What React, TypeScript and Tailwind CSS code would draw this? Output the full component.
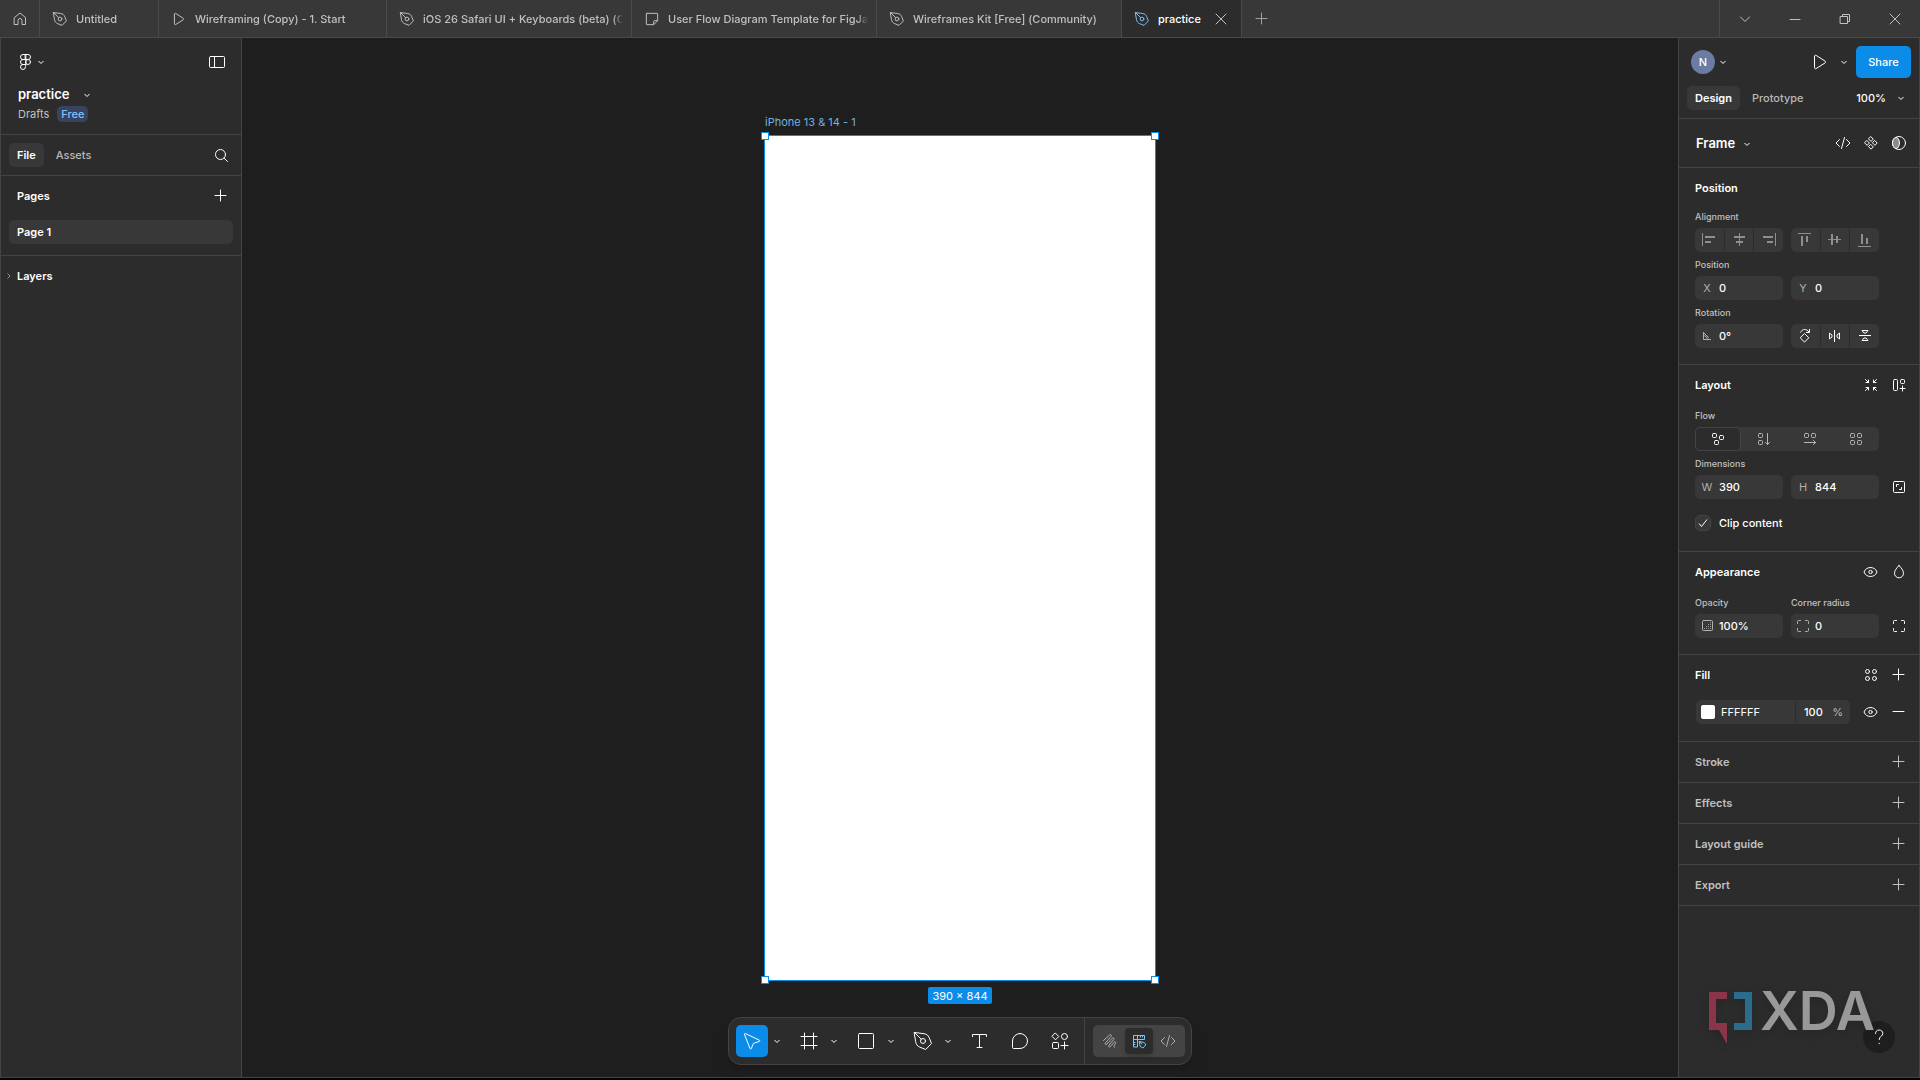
import type { ReactNode } from "react";

type IconProps = { children: ReactNode; className?: string; weight?: number };

function Icon({ children, className = "size-6", weight = 1 }: IconProps) {
  return (
    <svg
      viewBox="0 0 24 24"
      fill="none"
      stroke="currentColor"
      strokeWidth={weight}
      strokeLinecap="round"
      strokeLinejoin="round"
      aria-hidden="true"
      className={`shrink-0 ${className}`}
    >
      {children}
    </svg>
  );
}

// 28x24 artwork that fills one cell of a three button strip
function StripIcon({ children }: { children: ReactNode }) {
  return (
    <svg viewBox="0 0 28 24" fill="none" stroke="currentColor" aria-hidden="true" className="h-6 w-7">
      {children}
    </svg>
  );
}

const Chevron = ({ className = "size-4" }: { className?: string }) => (
  <svg viewBox="0 0 16 16" fill="none" stroke="currentColor" aria-hidden="true" className={`shrink-0 ${className}`}>
    <path d="M5.5 7 8 9.5 10.5 7" />
  </svg>
);

const Pen = ({ className, weight }: { className?: string; weight?: number }) => (
  <Icon className={className} weight={weight}>
    <path d="M3.5 3.5 13 4.7c2.500.4 4.200 1.500 5.200 4l2.300 5.800-5.800 6-5.800-2.300c-2.500-1-3.800-2.700-4.200-5.200z" />
    <path d="m3.500 3.500 6.700 6.700" />
    <circle cx="12" cy="12" r="2.500" />
  </Icon>
);

const Plus = () => (
  <Icon>
    <path d="M6 11.500h11M11.500 6v11" />
  </Icon>
);

const Play = ({ className, weight }: { className?: string; weight?: number }) => (
  <Icon className={className} weight={weight}>
    <path d="M6.500 6.300v11.400c0 1 .8 1.300 1.600.9l9-5.700c.7-.5.7-1.300 0-1.800l-9-5.700c-.8-.4-1.600 0-1.600.9z" />
  </Icon>
);

const Code = ({ className }: { className?: string }) => (
  <Icon className={className}>
    <path d="m8.500 8.500-3.500 3.500 3.500 3.500M15.500 8.500l3.500 3.500-3.500 3.500M13.500 6.500l-3 11" />
  </Icon>
);

const Eye = () => (
  <Icon>
    <path d="M11.500 7.500c3 0 5.300 1.500 6.500 4.500-1.200 3-3.500 4.500-6.500 4.500S6.200 15 5 12c1.200-3 3.500-4.500 6.500-4.500z" />
    <circle cx="11.500" cy="12" r="1.700" />
  </Icon>
);

const FigJam = () => (
  <Icon className="size-4" weight={1.500}>
    <path d="M4.500 3.500h15a1 1 0 0 1 1 1v10l-6 6h-10a1 1 0 0 1-1-1v-15a1 1 0 0 1 1-1zM20 14.500h-4a1.500 1.500 0 0 0-1.500 1.500v4" />
  </Icon>
);

const Corners = () => (
  <Icon>
    <path d="M6.500 9.500v-2a1 1 0 0 1 1-1h2M14.500 6.500h2a1 1 0 0 1 1 1v2M17.500 14.500v2a1 1 0 0 1-1 1h-2M9.500 17.500h-2a1 1 0 0 1-1-1v-2" />
  </Icon>
);

const fileTabs = [
  { title: "Untitled", width: "w-[119px]", icon: <Pen className="size-[18px]" weight={1.300} /> },
  { title: "Wireframing (Copy) - 1. Start", width: "w-[228px]", icon: <Play className="size-5" weight={1.200} /> },
  { title: "iOS 26 Safari UI + Keyboards (beta) (C", width: "w-[245px]", icon: <Pen className="size-[18px]" weight={1.300} /> },
  { title: "User Flow Diagram Template for FigJa", width: "w-[245px]", icon: <FigJam /> },
  { title: "Wireframes Kit [Free] (Community)", width: "w-[245px]", icon: <Pen className="size-[18px]" weight={1.300} /> },
];

function TitleBar() {
  return (
    <header className="flex h-[38px] shrink-0 border-b border-[#4a4a4a] bg-[#383838] font-medium text-[#c0c0c0]">
      <button aria-label="Home" className="flex w-10 items-center justify-center border-r border-[#4a4a4a]">
        <Icon>
          <path d="M6.500 10.500 12 6l5.500 4.500v7h-3.500v-4a2 2 0 0 0-4 0v4H6.500z" />
        </Icon>
      </button>
      {fileTabs.map((tab) => (
        <button key={tab.title} className={`flex items-center gap-2 border-r border-[#4a4a4a] pt-px pl-3 ${tab.width}`}>
          <span className="flex w-4 shrink-0 items-center justify-center">{tab.icon}</span>
          <span className="min-w-0 flex-1 mask-r-from-[190px] mask-r-to-[200px] text-left whitespace-nowrap">{tab.title}</span>
        </button>
      ))}
      <div className="flex w-[120px] items-center border-r border-[#4a4a4a] bg-[#2c2c2c] px-3 pt-px">
        <button className="flex flex-1 items-center gap-2 text-white">
          <span className="flex w-4 shrink-0 items-center justify-center text-[#7cc4f8]">
            <Pen className="size-[18px]" weight={1.300} />
          </span>
          practice
        </button>
        <button aria-label="Close tab" className="flex w-4 justify-center">
          <Icon>
            <path d="m7 7 10 10M17 7 7 17" />
          </Icon>
        </button>
      </div>
      <button aria-label="New tab" className="flex w-[39px] items-center justify-center pt-px text-[#a0a0a0]">
        <Plus />
      </button>
      <div className="ml-auto flex border-l border-[#4a4a4a]">
        <button aria-label="Tab list" className="flex w-[50px] items-center justify-center">
          <Icon><path d="M7.500 10 12 14.500l4.500-4.500" /></Icon>
        </button>
        <button aria-label="Minimize" className="flex w-[50px] items-center justify-center">
          <Icon><path d="M7 12.500h10" /></Icon>
        </button>
        <button aria-label="Restore" className="flex w-[50px] items-center justify-center">
          <Icon><path d="M7.500 9.500h7v7h-7zM9.500 9.500v-2h7v7h-2" /></Icon>
        </button>
        <button aria-label="Close window" className="flex w-[50px] items-center justify-center">
          <Icon><path d="m7 7 10 10M17 7 7 17" /></Icon>
        </button>
      </div>
    </header>
  );
}

function LeftPanel() {
  return (
    <aside className="w-[242px] shrink-0 border-x border-[#444] bg-[#2c2c2c]">
      <div className="h-[97px] border-b border-[#444] pt-3">
        <div className="flex items-center justify-between px-3">
          <button aria-label="Main menu" className="flex items-center">
            <Icon>
              <path d="M12.500 4.500h-2.500a2.500 2.500 0 0 0 0 5h2.500zM12.500 4.500H15a2.500 2.500 0 0 1 0 5h-2.500zM12.500 9.500h-2.500a2.500 2.500 0 0 0 0 5h2.500zM12.500 14.500h-2.500a2.500 2.500 0 1 0 2.500 2.500z" />
              <circle cx="15" cy="12" r="2.500" />
            </Icon>
            <Chevron className="-ml-1 size-4" />
          </button>
          <button aria-label="Toggle sidebar">
            <Icon>
              <rect x="4.500" y="6.500" width="15" height="11" rx="1" />
              <path d="M9.500 6.500v11" />
            </Icon>
          </button>
        </div>
        <button className="mt-[11px] flex h-5 items-center gap-2.5 pl-[17px] text-[13px] font-semibold">
          practice
          <Chevron className="size-4" />
        </button>
        <div className="mt-px flex items-center gap-2 pl-[17px] text-[#c0c0c0]">
          <a href="#drafts">Drafts</a>
          <span className="rounded-[5px] bg-[#394360] px-1 leading-4 font-medium text-[#7cc4f8]">Free</span>
        </div>
      </div>
      <div className="flex h-[41px] items-center border-b border-[#444] px-2 font-medium">
        <button className="h-6 rounded-[5px] bg-[#383838] px-2 font-semibold">File</button>
        <button className="ml-1 h-6 px-2 text-[#b8b8b8]">Assets</button>
        <button aria-label="Search" className="ml-auto">
          <Icon>
            <circle cx="11.500" cy="11.500" r="5" />
            <path d="m15.200 15.200 3.300 3.300" />
          </Icon>
        </button>
      </div>
      <section className="h-20 border-b border-[#444] px-2">
        <div className="flex h-10 items-center justify-between pl-2">
          <h2 className="font-semibold">Pages</h2>
          <button aria-label="Add page"><Plus /></button>
        </div>
        <button className="mt-1 h-6 w-full rounded-[5px] bg-[#383838] px-2 text-left font-semibold">Page 1</button>
      </section>
      <button className="flex h-10 items-center font-semibold">
        <svg viewBox="0 0 16 24" fill="none" stroke="#8c8c8c" aria-hidden="true" className="h-6 w-4">
          <path d="m6.500 9.500 2.500 2.500-2.500 2.500" />
        </svg>
        Layers
      </button>
    </aside>
  );
}

function Toolbar() {
  return (
    <div className="absolute inset-x-0 bottom-3 mx-auto flex h-12 w-[464px] items-center rounded-[13px] border border-[#444] bg-[#2c2c2c] pl-[7px] shadow-lg">
      <div className="flex gap-2">
        <div className="flex items-center">
          <button aria-label="Move" className="flex size-8 items-center justify-center rounded-[5px] bg-[#0c8ce9]">
            <Icon><path d="M4.500 5.500 10 19.500c.3.800 1.100.8 1.400 0l1.700-4.400c.2-.5.500-.8 1-1l5.200-1.600c.8-.3.800-1 0-1.300L5.400 4.500c-.6-.2-1.100.3-.9 1z" /></Icon>
          </button>
          <button aria-label="Move tools" className="flex w-[17px] justify-end"><Chevron /></button>
        </div>
        <div className="flex items-center">
          <button aria-label="Frame" className="flex size-8 items-center justify-center">
            <Icon><path d="M7.500 4v16M16.500 4v16M4 7.500h16M4 16.500h16" /></Icon>
          </button>
          <button aria-label="Region tools" className="flex w-[17px] justify-end"><Chevron /></button>
        </div>
        <div className="flex items-center">
          <button aria-label="Rectangle" className="flex size-8 items-center justify-center">
            <Icon><rect x="4.500" y="4.500" width="15" height="15" rx="1" /></Icon>
          </button>
          <button aria-label="Shape tools" className="flex w-[17px] justify-end"><Chevron /></button>
        </div>
        <div className="flex items-center">
          <button aria-label="Pen" className="flex size-8 items-center justify-center"><Pen /></button>
          <button aria-label="Creation tools" className="flex w-[17px] justify-end"><Chevron /></button>
        </div>
        <button aria-label="Text" className="flex size-8 items-center justify-center">
          <Icon><path d="M4.500 7.500v-2h14v2M11.500 5.500v13M9 18.500h5" /></Icon>
        </button>
        <button aria-label="Comment" className="flex size-8 items-center justify-center">
          <Icon><path d="M12 4.500a7.500 7.500 0 0 1 0 15H5.500a1 1 0 0 1-1-1V12A7.500 7.500 0 0 1 12 4.500z" /></Icon>
        </button>
        <button aria-label="Actions" className="flex size-8 items-center justify-center">
          <Icon>
            <path d="m7.500 4.200 3.300 3.300-3.300 3.300-3.300-3.300zM16.500 13v7M13 16.500h7" />
            <circle cx="16.500" cy="7.500" r="3" />
            <rect x="4.500" y="13.500" width="6" height="6" rx="1" />
          </Icon>
        </button>
      </div>
      <div className="ml-2 h-full border-l border-[#444]" />
      <div className="ml-2 flex h-8 items-center rounded-[5px] bg-[#444] px-0.5 text-[#b0b0b0]">
        <button aria-label="Draw" className="flex w-[30px] justify-center">
          <Icon>
            <path d="M5.500 11.500 11.600 6c1.200-1 2.400.2 1.500 1.400l-5.600 6.400c-1 1.300.2 2.300 1.400 1.300l5.300-5.800c1.100-1.100 2.400 0 1.500 1.200l-4.700 5.700c-1 1.300.2 2.400 1.400 1.400l3.600-4.300c1-1.100 2.300-.1 1.500 1.100l-1.300 2.100c-.4.900-.2 1.600.6 2" />
          </Icon>
        </button>
        <button aria-label="Design" className="flex h-[26px] w-7 items-center justify-center rounded-[4px] bg-[#2c2c2c] text-[#7cc4f8] shadow-md">
          <Icon>
            <path d="M7 6.500h10.500v4h-7v7.500h-4V7a.5.5 0 0 1 .5-.500zM10.500 6.500v4h-4M13.500 6.500v1.500M15.500 6.500v1.500M6.500 13.500h1.500M6.500 15.500h1.500" />
            <path d="m12.500 12.500 4.800 1.100 1.500 2.400-2.900 3-2.400-1.400zM12.500 12.500l2.300 2.500" />
          </Icon>
        </button>
        <button aria-label="Dev Mode" className="flex w-[30px] justify-center"><Code /></button>
      </div>
    </div>
  );
}

function Canvas() {
  return (
    <main className="relative flex min-w-0 flex-1 flex-col items-center overflow-hidden bg-[#1e1e1e] pt-[76px]">
      <div className="w-[390px]">
        <p className="mb-1.5 leading-4 text-[#6fb2e3]">iPhone 13 &amp; 14 - 1</p>
        <div className="relative h-[844px] bg-white ring-1 ring-[#0c8ce9]">
          <i className="absolute -top-1 -left-1 size-2 border border-[#0c8ce9] bg-white" />
          <i className="absolute -top-1 -right-1 size-2 border border-[#0c8ce9] bg-white" />
          <i className="absolute -bottom-1 -left-1 size-2 border border-[#0c8ce9] bg-white" />
          <i className="absolute -right-1 -bottom-1 size-2 border border-[#0c8ce9] bg-white" />
        </div>
      </div>
      <span className="mt-[7px] rounded-[2px] bg-[#0c8ce9] px-1 pt-px leading-4">390 × 844</span>
      <Toolbar />
    </main>
  );
}

function Field({ label, value, children }: { label: string; value: string; children: ReactNode }) {
  return (
    <label className="flex h-6 items-center rounded-[5px] bg-[#383838] text-[#b0b0b0]">
      <span className="flex w-6 shrink-0 items-center justify-center">{children}</span>
      <input aria-label={label} defaultValue={value} className="w-full min-w-0 bg-transparent font-medium text-white outline-none" />
    </label>
  );
}

const Label = ({ children }: { children: ReactNode }) => (
  <p className="flex h-6 items-center pt-px text-[9px] font-medium text-[#c0c0c0]">{children}</p>
);

const strip = "grid w-[88px] grid-cols-[29px_28px_29px] gap-px overflow-hidden rounded-[5px]";
const cell = "h-6 bg-[#383838]";
const row = "grid grid-cols-[88px_88px_24px] items-center gap-x-2";

function PositionSection() {
  return (
    <section className="border-b border-[#444] pb-4 pl-4">
      <h2 className="flex h-9 items-center pt-1 font-semibold">Position</h2>
      <Label>Alignment</Label>
      <div className={`${row} text-[#8f8f8f]`}>
        <div className={strip}>
          <button aria-label="Align left" className={cell}>
            <StripIcon><path d="M7.500 5v13" /><path d="M10 9h10M10 14h6" strokeWidth="2" /></StripIcon>
          </button>
          <button aria-label="Align horizontal centers" className={cell}>
            <StripIcon><path d="M14.500 5v13" /><path d="M9 9h11M11 14h7" strokeWidth="2" /></StripIcon>
          </button>
          <button aria-label="Align right" className={cell}>
            <StripIcon><path d="M21.500 5v13" /><path d="M9 9h10M13 14h6" strokeWidth="2" /></StripIcon>
          </button>
        </div>
        <div className={strip}>
          <button aria-label="Align top" className={cell}>
            <StripIcon><path d="M7 5.500h13" /><path d="M11 8v10M16 8v6" strokeWidth="2" /></StripIcon>
          </button>
          <button aria-label="Align vertical centers" className={cell}>
            <StripIcon><path d="M7 11.500h13" /><path d="M11 6v11M16 8v7" strokeWidth="2" /></StripIcon>
          </button>
          <button aria-label="Align bottom" className={cell}>
            <StripIcon><path d="M8 18.500h13" /><path d="M12 6v10M17 10v6" strokeWidth="2" /></StripIcon>
          </button>
        </div>
      </div>
      <Label>Position</Label>
      <div className={row}>
        <Field label="X position" value="0">X</Field>
        <Field label="Y position" value="0">Y</Field>
      </div>
      <Label>Rotation</Label>
      <div className={row}>
        <Field label="Rotation" value="0°">
          <Icon><path d="M8.500 8.500v7h7M8.500 11.500a4 4 0 0 1 4 4M8.500 8.500l5 5" /></Icon>
        </Field>
        <div className={strip}>
          <button aria-label="Rotate 90 degrees" className={cell}>
            <StripIcon><path d="m13.500 9.500 4.300 4.300-4.300 4.300-4.300-4.300zM9.500 8.500c1-2 2.300-3 4-3 1.800 0 3 .8 4.500 2.500M18.500 5v3.500H15" /></StripIcon>
          </button>
          <button aria-label="Flip horizontal" className={cell}>
            <StripIcon><path d="M13.500 6v12M8.500 9v6l2.500-2v-2zM18.500 9v6l-2.500-2v-2z" /></StripIcon>
          </button>
          <button aria-label="Flip vertical" className={cell}>
            <StripIcon><path d="M9 11.500h12M12 6.500h6l-2 2.500h-2zM12 16.500h6l-2-2.500h-2z" /></StripIcon>
          </button>
        </div>
      </div>
    </section>
  );
}

function SectionHead({ title, children }: { title: string; children: ReactNode }) {
  return (
    <div className="flex h-10 items-center justify-between pr-2">
      <h2 className="font-semibold">{title}</h2>
      <div className="flex gap-1">{children}</div>
    </div>
  );
}

function LayoutSection() {
  return (
    <section className="border-b border-[#444] pb-4 pl-4">
      <SectionHead title="Layout">
        <button aria-label="Resize to fit">
          <Icon><path d="M6.500 6.500 9.500 9.500M9.500 7v2.500H7M17.500 6.500l-3 3M14.500 7v2.500H17M6.500 17.500l3-3M7 14.500h2.500V17M17.500 17.500l-3-3M17 14.500h-2.500V17" /></Icon>
        </button>
        <button aria-label="Use auto layout">
          <Icon><path d="M15.500 13v5M13 15.500h5" /><rect x="6.500" y="6.500" width="4" height="11" rx="1" /><rect x="13.500" y="6.500" width="4" height="4" rx="1" /></Icon>
        </button>
      </SectionHead>
      <div className="-mt-0.5">
        <Label>Flow</Label>
        <div className="grid w-[184px] grid-cols-4 rounded-[5px] bg-[#383838] text-[#b8b8b8]">
          <button aria-label="Free form" className="flex h-6 items-center justify-center rounded-[5px] border border-[#444] bg-[#2c2c2c] text-white">
            <Icon><rect x="6.500" y="6.500" width="4" height="4" rx="1" /><rect x="13.500" y="8.500" width="4" height="4" rx="1" /><rect x="8.500" y="13.500" width="4" height="4" rx="1" /></Icon>
          </button>
          <button aria-label="Vertical" className="flex h-6 items-center justify-center">
            <Icon><rect x="6.500" y="6.500" width="4" height="4" rx="1" /><rect x="6.500" y="13.500" width="4" height="4" rx="1" /><path d="M15.500 6.500v11M13.500 15.500l2 2 2-2" /></Icon>
          </button>
          <button aria-label="Horizontal" className="flex h-6 items-center justify-center">
            <Icon><rect x="6.500" y="6.500" width="4" height="4" rx="1" /><rect x="13.500" y="6.500" width="4" height="4" rx="1" /><path d="M6.500 15.500h11M15.500 13.500l2 2-2 2" /></Icon>
          </button>
          <button aria-label="Grid" className="flex h-6 items-center justify-center">
            <Icon><rect x="6.500" y="6.500" width="4" height="4" rx="1" /><rect x="13.500" y="6.500" width="4" height="4" rx="1" /><rect x="6.500" y="13.500" width="4" height="4" rx="1" /><rect x="13.500" y="13.500" width="4" height="4" rx="1" /></Icon>
          </button>
        </div>
      </div>
      <Label>Dimensions</Label>
      <div className={row}>
        <Field label="Width" value="390">W</Field>
        <Field label="Height" value="844">H</Field>
        <button aria-label="Lock aspect ratio">
          <Icon><rect x="6.500" y="6.500" width="11" height="11" rx="1" /><path d="M9.500 11.500v-2h2M12.500 14.500h2v-2" /></Icon>
        </button>
      </div>
      <div className="mt-4 mb-1 flex h-4 items-center gap-2">
        <span className="relative size-4">
          <input id="clip" type="checkbox" defaultChecked className="block size-4 appearance-none rounded-[5px] border border-[#444] bg-[#383838]" />
          <svg viewBox="0 0 16 16" fill="none" stroke="currentColor" aria-hidden="true" className="pointer-events-none absolute inset-0 size-4">
            <path d="m4 8.500 2.500 3L12 4.500" />
          </svg>
        </span>
        <label htmlFor="clip" className="font-medium">Clip content</label>
      </div>
    </section>
  );
}

function AppearanceSection() {
  return (
    <section className="border-b border-[#444] pb-4 pl-4">
      <SectionHead title="Appearance">
        <button aria-label="Toggle visibility"><Eye /></button>
        <button aria-label="Blend mode">
          <Icon><path d="M12 5.500c2.500 2.700 4.500 5 4.500 7.800a4.500 4.500 0 0 1-9 0c0-2.800 2-5.100 4.500-7.800z" /></Icon>
        </button>
      </SectionHead>
      <div className={`${row} -mt-0.5`}>
        <Label>Opacity</Label>
        <Label>Corner radius</Label>
      </div>
      <div className={row}>
        <Field label="Opacity" value="100%">
          <Icon>
            <rect x="7.500" y="6.500" width="10" height="10" rx="1" />
            <path d="M15.500 8.500v0M13.500 10.500v0M15.500 10.500v0M11.500 12.500v0M13.500 12.500v0M15.500 12.500v0M9.500 14.500v0M11.500 14.500v0M13.500 14.500v0M15.500 14.500v0" />
          </Icon>
        </Field>
        <Field label="Corner radius" value="0"><Corners /></Field>
        <button aria-label="Individual corners"><Corners /></button>
      </div>
    </section>
  );
}

function FillSection() {
  return (
    <section className="border-b border-[#444] pb-4 pl-4">
      <SectionHead title="Fill">
        <button aria-label="Styles">
          <Icon><circle cx="8.500" cy="8.500" r="2" /><circle cx="15.500" cy="8.500" r="2" /><circle cx="8.500" cy="15.500" r="2" /><circle cx="15.500" cy="15.500" r="2" /></Icon>
        </button>
        <button aria-label="Add fill"><Plus /></button>
      </SectionHead>
      <div className="mt-[5px] flex h-[25px] items-start justify-between pr-2 pl-px">
        <div className="flex gap-px">
          <div className="flex h-6 w-[99px] items-center gap-1.5 rounded-l-[5px] bg-[#383838] pl-[5px]">
            <button aria-label="Fill colour" className="size-3.5 shrink-0 rounded-[2px] bg-white" />
            <input aria-label="Hex" defaultValue="FFFFFF" className="w-full min-w-0 bg-transparent outline-none" />
          </div>
          <div className="flex h-6 w-[54px] items-center justify-between rounded-r-[5px] bg-[#383838] pr-[7px] pl-2">
            <input aria-label="Fill opacity" defaultValue="100" className="w-6 bg-transparent font-medium outline-none" />
            <span className="text-[#b8b8b8]">%</span>
          </div>
        </div>
        <div className="flex gap-1">
          <button aria-label="Hide fill"><Eye /></button>
          <button aria-label="Remove fill"><Icon><path d="M6 11.500h11" /></Icon></button>
        </div>
      </div>
    </section>
  );
}

function RightPanel() {
  return (
    <aside className="relative w-[242px] shrink-0 border-x border-[#444] bg-[#2c2c2c]">
      <div className="h-[81px] border-b border-[#444] pt-2">
        <div className="flex h-8 items-center pr-2 pl-3">
          <button aria-label="Account" className="flex items-center">
            <span className="flex size-6 items-center justify-center rounded-full bg-[#6b7ba3] font-medium">N</span>
            <Chevron />
          </button>
          <button aria-label="Present" className="ml-auto"><Play /></button>
          <button aria-label="Present options" className="mx-1"><Chevron /></button>
          <button className="h-8 w-[55px] rounded-[5px] bg-[#0c8ce9] font-medium">Share</button>
        </div>
        <div className="mt-2 flex h-6 items-center pr-2.5 pl-2 font-medium">
          <button className="h-6 rounded-[5px] bg-[#383838] px-2 font-semibold">Design</button>
          <button className="ml-1 h-6 px-2 text-[#b8b8b8]">Prototype</button>
          <button className="ml-auto flex items-center gap-[7px]">100% <Chevron /></button>
        </div>
      </div>
      <div className="flex h-[49px] items-center border-b border-[#444] pr-2 pl-[17px]">
        <button className="flex items-center gap-1 pt-px text-[13px] font-semibold">Frame <Chevron /></button>
        <div className="ml-auto flex gap-1">
          <button aria-label="Ready for dev"><Code /></button>
          <button aria-label="Create component">
            <Icon><path d="m12 5.800 2.300 2.300-2.300 2.300-2.300-2.300zM12 13.600l2.300 2.300-2.300 2.300-2.300-2.300zM8.100 9.700l2.300 2.300-2.300 2.300L5.800 12zM15.900 9.700l2.300 2.300-2.300 2.300-2.300-2.300z" /></Icon>
          </button>
          <button aria-label="Use as mask">
            <Icon><circle cx="12" cy="12" r="6.500" /><ellipse cx="9" cy="12" rx="3.500" ry="5.500" fill="#8c8c8c" /></Icon>
          </button>
        </div>
      </div>
      <PositionSection />
      <LayoutSection />
      <AppearanceSection />
      <FillSection />
      {["Stroke", "Effects", "Layout guide", "Export"].map((title) => (
        <section key={title} className="border-b border-[#444] pl-4 text-[#c0c0c0]">
          <SectionHead title={title}>
            <button aria-label={`Add ${title}`}><Plus /></button>
          </SectionHead>
        </section>
      ))}
      <button aria-label="Help" className="absolute right-6 bottom-6 flex size-8 items-center justify-center rounded-full bg-[#1e1e1e]">
        <Icon>
          <path d="M8.500 8.500c0-2 1.500-3.500 3.700-3.500 2 0 3.600 1.400 3.600 3.300 0 3-3.600 3-3.600 6.200M12.200 18.300v.4" />
        </Icon>
      </button>
      <Watermark />
    </aside>
  );
}

function Watermark() {
  return (
    <div className="pointer-events-none absolute right-8 bottom-[31px] flex h-[54px] w-[178px] items-start gap-2 drop-shadow-lg">
      <svg viewBox="0 0 43 54" aria-hidden="true" className="h-[54px] w-[43px] shrink-0">
        <path d="M0 0h18v7H7v24h11v21L10 38H0z" fill="#8b354a" />
        <path d="M25 0h18v38H25v-7h11V7H25z" fill="#2a6c8e" />
      </svg>
      <span className="text-[54px] leading-[38px] font-semibold text-[#999]">XDA</span>
    </div>
  );
}

export default function App() {
  return (
    <div className="flex h-screen flex-col overflow-hidden bg-black pb-0.5 font-['Inter',sans-serif] text-[11px] text-white">
      <TitleBar />
      <div className="flex min-h-0 flex-1 border-b border-[#444]">
        <LeftPanel />
        <Canvas />
        <RightPanel />
      </div>
    </div>
  );
}
